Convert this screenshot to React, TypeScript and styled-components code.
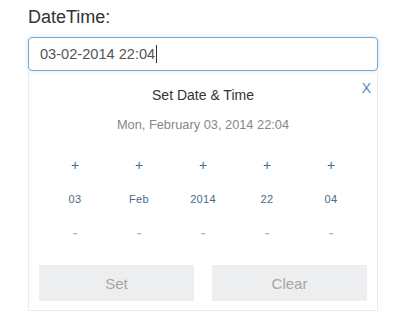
import styled, { createGlobalStyle } from "styled-components";

const GlobalStyle = createGlobalStyle`
  body {
    margin: 0;
    background: #ffffff;
    font-family: "Liberation Sans", Arial, sans-serif;
  }
`;

const Page = styled.div`
  padding: 6px 22px 0 28px;
  width: 350px;
`;

const Label = styled.div`
  font-size: 18px;
  line-height: 22px;
  color: #333333;
  height: 31px;
`;

const Input = styled.div`
  box-sizing: border-box;
  height: 34px;
  border: 1px solid #7aa7cf;
  border-radius: 4px;
  box-shadow: 0 0 4px rgba(102, 175, 233, 0.35);
  padding: 0 11px;
  display: flex;
  align-items: center;
  font-size: 14.6px;
  color: #555555;
`;

const Caret = styled.span`
  display: inline-block;
  width: 1px;
  height: 18px;
  background: #333333;
  margin-left: 1px;
`;

const Panel = styled.div`
  box-sizing: border-box;
  border: 1px solid #ececec;
  border-top: none;
  height: 240px;
  padding: 0 10px;
  position: relative;
`;

const Close = styled.span`
  position: absolute;
  top: 9px;
  right: 6px;
  font-size: 14px;
  color: #5a8bb8;
`;

const Title = styled.div`
  text-align: center;
  font-size: 14px;
  color: #333333;
  padding-top: 16px;
  height: 30px;
  line-height: 16px;
`;

const Subtitle = styled.div`
  text-align: center;
  font-size: 12.8px;
  color: #888888;
  line-height: 16px;
  height: 20px;
`;

const Spinners = styled.div`
  display: grid;
  grid-template-columns: repeat(5, 64px);
  justify-content: center;
  margin-top: 11px;
`;

const Column = styled.div`
  display: grid;
  grid-template-rows: 34px 33px 36px;
  justify-items: center;
  align-items: center;
`;

const Step = styled.span<{ $minus?: boolean }>`
  font-size: 14px;
  color: ${(p) => (p.$minus ? "#a8a8a8" : "#3e6f99")};
`;

const Value = styled.span`
  font-size: 11px;
  color: #4a6a88;
  letter-spacing: 0.3px;
`;

const Buttons = styled.div`
  display: flex;
  justify-content: space-between;
  margin-top: 14px;
`;

const Button = styled.div`
  width: 155px;
  height: 36px;
  background: #eceeef;
  color: #a6a6a6;
  font-size: 15px;
  display: flex;
  align-items: center;
  justify-content: center;
`;

const fields = ["03", "Feb", "2014", "22", "04"];

export default function App() {
  return (
    <>
      <GlobalStyle />
      <Page>
        <Label>DateTime:</Label>
        <Input>
          03-02-2014 22:04
          <Caret />
        </Input>
        <Panel>
          <Close>X</Close>
          <Title>Set Date &amp; Time</Title>
          <Subtitle>Mon, February 03, 2014 22:04</Subtitle>
          <Spinners>
            {fields.map((f) => (
              <Column key={f}>
                <Step>+</Step>
                <Value>{f}</Value>
                <Step $minus>-</Step>
              </Column>
            ))}
          </Spinners>
          <Buttons>
            <Button>Set</Button>
            <Button>Clear</Button>
          </Buttons>
        </Panel>
      </Page>
    </>
  );
}
